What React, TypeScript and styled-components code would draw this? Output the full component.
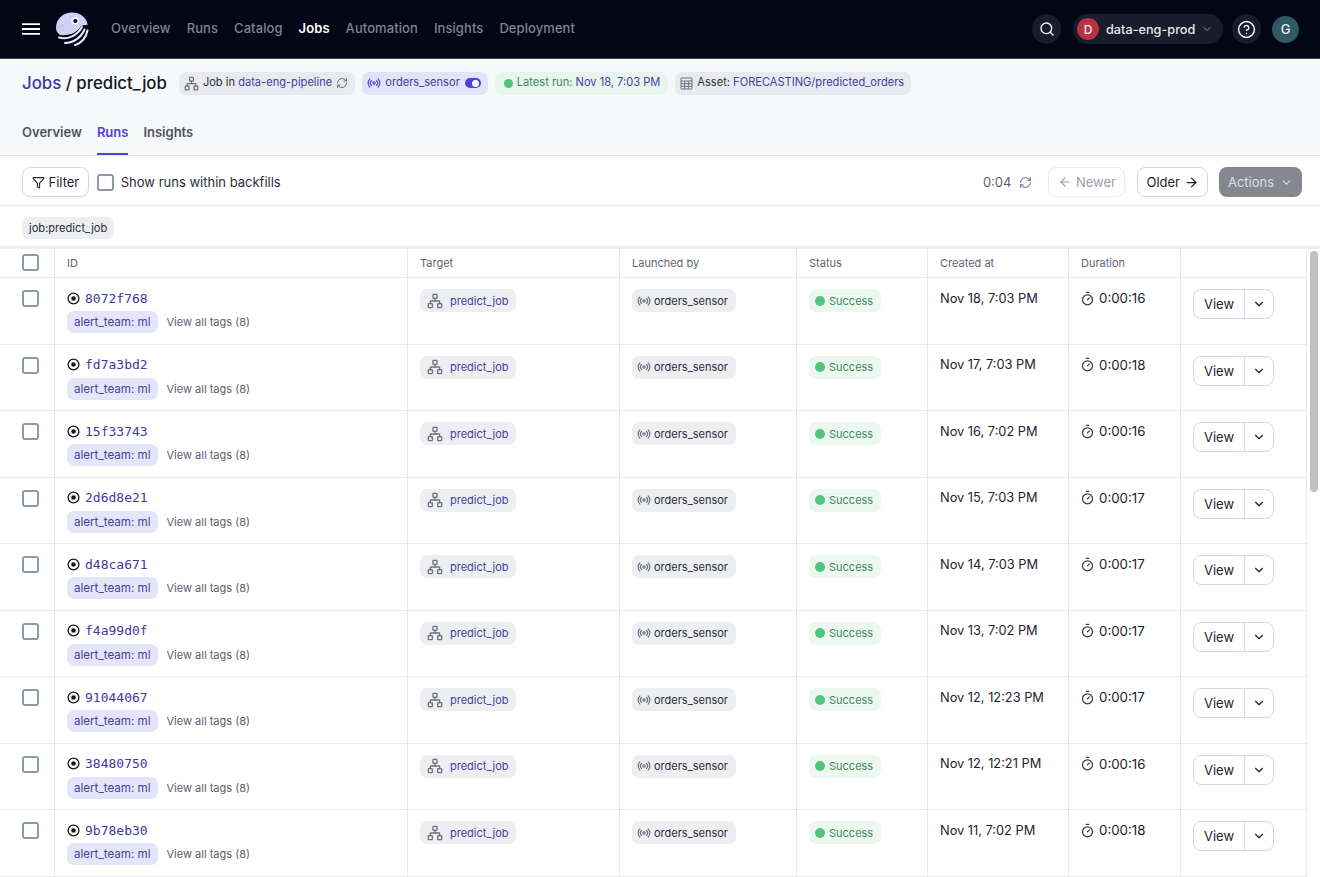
import React from 'react';
import styled, { createGlobalStyle } from 'styled-components';
import {
  ArrowLeft,
  ArrowRight,
  ChevronDown,
  CircleHelp,
  Filter,
  Network,
  Radio,
  RefreshCw,
  Search,
  Timer,
} from 'lucide-react';

const GlobalStyle = createGlobalStyle`
  html, body {
    margin: 0;
    height: 100%;
    overflow: hidden;
    background: #fff;
    font-family: Inter, "Liberation Sans", sans-serif;
    color: #1d2230;
  }
  * { box-sizing: border-box; }
`;

const Page = styled.div`
  display: flex;
  flex-direction: column;
  height: 877px;
  overflow: hidden;
`;

const TopBar = styled.header`
  flex: none;
  height: 59px;
  display: flex;
  align-items: center;
  padding: 0 21px 0 22px;
  background: #030615;
  border-bottom: 1px solid #3b3f50;
`;

const Nav = styled.nav`
  display: flex;
  gap: 16px;
  margin: 0 0 2px 22px;
  flex: 1;
`;

const NavItem = styled.span<{ $active?: boolean }>`
  font-size: 13px;
  letter-spacing: 0.08px;
  font-weight: ${(p) => (p.$active ? 600 : 500)};
  color: ${(p) => (p.$active ? '#fff' : '#7d8391')};
`;

const RoundButton = styled.div`
  width: 29px;
  height: 30px;
  border-radius: 50%;
  display: flex;
  align-items: center;
  justify-content: center;
  background: #191d2b;
  color: #fff;
`;

const Workspace = styled.div`
  height: 30px;
  width: 150px;
  margin: 0 9px 0 12px;
  padding: 0 10px 0 4px;
  border-radius: 15px;
  display: flex;
  align-items: center;
  background: #191d2b;
  color: #e6e7ec;
  font-size: 12.7px;
  font-weight: 500;
`;

const Avatar = styled.span<{ $bg: string; $size: number }>`
  width: ${(p) => p.$size}px;
  height: ${(p) => p.$size}px;
  flex: none;
  border-radius: 50%;
  display: flex;
  align-items: center;
  justify-content: center;
  background: ${(p) => p.$bg};
  color: #e9ebef;
  font-size: 12px;
  font-weight: 500;
`;

const WorkspaceName = styled.span`
  margin-left: 7px;
  flex: 1;
`;

const UserAvatar = styled(Avatar)`
  margin-left: 11px;
  font-size: 13px;
`;

const PageHeader = styled.section`
  flex: none;
  height: 97px;
  padding: 0 22px;
  background: #f7f8fa;
  border-bottom: 1px solid #e4e6eb;
`;

const TitleRow = styled.div`
  height: 48px;
  display: flex;
  align-items: center;
`;

const Title = styled.h1`
  margin: 0 12px 0 0;
  font-size: 16.8px;
  font-weight: 500;
  color: #14171f;
  white-space: nowrap;
`;

const TitleLink = styled.span`
  color: #3d3aa0;
`;

const Chips = styled.div`
  display: flex;
  gap: 7px;
`;

const HeaderChip = styled.div<{ $tone?: 'gray' | 'purple' | 'green' }>`
  height: 23px;
  padding: 0 ${(p) => (p.$tone === 'green' ? '8px 0 9px' : '7px 0 5px')};
  border-radius: 7px;
  display: flex;
  align-items: center;
  gap: 4px;
  font-size: 11.1px;
  line-height: 1;
  white-space: nowrap;
  color: #2b2f3b;
  background: ${(p) =>
    p.$tone === 'purple' ? '#e3e3f8' : p.$tone === 'green' ? '#e7f5ec' : '#e9eaef'};
`;

const ChipRefresh = styled(RefreshCw)`
  width: 12px;
  height: 12px;
  color: #6b7180;
`;

const Linked = styled.span`
  color: #45419f;
`;

const GreenLabel = styled.span`
  color: #3e8a5c;
`;

const Toggle = styled.span`
  width: 16px;
  height: 10px;
  margin-left: 1px;
  border-radius: 5px;
  position: relative;
  background: #4f43dd;

  &::after {
    content: '';
    position: absolute;
    top: 1.5px;
    right: 1.5px;
    width: 7px;
    height: 7px;
    border-radius: 50%;
    background: #fff;
  }
`;

const Dot = styled.span<{ $size: number }>`
  width: ${(p) => p.$size}px;
  height: ${(p) => p.$size}px;
  border-radius: 50%;
  background: #4fc57e;
  flex: none;
`;

const Tabs = styled.div`
  display: flex;
  gap: 15px;
  height: 48px;
`;

const Tab = styled.div<{ $active?: boolean }>`
  height: 48px;
  padding-top: 17px;
  font-size: 13px;
  font-weight: 600;
  color: ${(p) => (p.$active ? '#4f43dd' : '#4f5463')};
  border-bottom: 2px solid ${(p) => (p.$active ? '#4f43dd' : 'transparent')};
`;

const Toolbar = styled.div`
  flex: none;
  height: 50px;
  padding: 3px 18px 0 22px;
  display: flex;
  align-items: center;
  border-bottom: 1px solid #e9eaef;
`;

const Button = styled.button<{ $disabled?: boolean }>`
  height: 30px;
  padding: 0 8.5px;
  display: inline-flex;
  align-items: center;
  gap: 4px;
  border-radius: 8px;
  border: 1px solid ${(p) => (p.$disabled ? '#e9eaf0' : '#d5d8e2')};
  background: #fff;
  font: 400 13px Inter, "Liberation Sans", sans-serif;
  color: ${(p) => (p.$disabled ? '#9a9fac' : '#1d2230')};
`;

const ActionsButton = styled(Button)`
  width: 83px;
  margin-left: 11px;
  border: none;
  color: #dcdee3;
  background: #85888e;
  justify-content: center;
  gap: 6px;
`;

const Box = styled.span`
  width: 17px;
  height: 17px;
  display: block;
  flex: none;
  border-radius: 3px;
  border: 2px solid #8d98ac;
  background: #fff;
`;

const BackfillLabel = styled.label`
  margin-left: 8px;
  display: flex;
  align-items: center;
  gap: 7px;
  flex: 1;
  font-size: 13px;
  color: #2a2e3a;
`;

const Elapsed = styled.span`
  font-size: 13px;
  color: #5b6171;
`;

const RefreshIcon = styled(RefreshCw)`
  width: 13px;
  height: 13px;
  margin: 0 16px 0 8px;
  color: #7b8190;
`;

const OlderButton = styled(Button)`
  padding: 0 8px;
  margin-left: 12px;
`;

const TagRow = styled.div`
  flex: none;
  height: 40px;
  padding: 11px 22px 0;
  display: flex;
  align-items: flex-start;
`;

const PlainTag = styled.span`
  display: inline-flex;
  align-items: center;
  height: 22px;
  padding: 0 7px;
  border-radius: 7px;
  background: #edeef2;
  font-size: 11.1px;
  color: #2a2e3a;
`;

const TableArea = styled.div`
  flex: 1;
  min-height: 0;
  display: flex;
  border-top: 3px solid #eceef2;
  overflow: hidden;
`;

const Table = styled.div`
  width: 1306px;
  flex: none;
`;

const ScrollTrack = styled.div`
  flex: 1;
  padding: 2px 2px 0 3px;
  border-left: 1px solid #e9eaef;
`;

const ScrollThumb = styled.div`
  height: 241px;
  border-radius: 4px;
  background: #c1c1c1;
`;

const columns = '55px 353px 212px 177px 131px 141px 112px 1fr';

const HeaderRow = styled.div`
  display: grid;
  grid-template-columns: ${columns};
  height: 29px;
  border-bottom: 1px solid #e9eaef;
`;

const HeaderCell = styled.div`
  padding: 0 12px 1px;
  display: flex;
  align-items: center;
  font-size: 11px;
  color: #5f6473;
  border-right: 1px solid #e9eaef;

  &:first-child {
    padding-left: 22px;
  }
  &:last-child {
    border-right: none;
  }
`;

const Row = styled.div`
  display: grid;
  grid-template-columns: ${columns};
  height: 66.5px;
  border-bottom: 1px solid #e9eaef;
`;

const Cell = styled.div`
  padding: 11px 12px 0;
  border-right: 1px solid #e9eaef;

  &:last-child {
    border-right: none;
  }
`;

const CheckCell = styled(Cell)`
  padding: 12px 0 0 22px;
`;

const IdLine = styled.div`
  height: 17px;
  margin-top: 0.5px;
  display: flex;
  align-items: center;
  gap: 5px;
`;

const RunId = styled.span`
  font-family: "DejaVu Sans Mono", "Liberation Mono", monospace;
  font-size: 13px;
  color: #3d3aa0;
`;

const TagLine = styled.div`
  margin-top: 4.5px;
  display: flex;
  align-items: center;
  gap: 9px;
`;

const TeamTag = styled.span`
  display: inline-flex;
  align-items: center;
  height: 22px;
  padding: 0 7px;
  border-radius: 7px;
  background: #e5e5f9;
  font-size: 11.6px;
  color: #45419f;
`;

const ViewTags = styled.span`
  font-size: 11px;
  color: #5b6070;
`;

const CellTag = styled.span<{ $tone?: 'gray' | 'green' }>`
  display: inline-flex;
  align-items: center;
  height: 23px;
  padding: 0 8px 0 6px;
  gap: 4px;
  border-radius: 7px;
  font-size: 11px;
  background: ${(p) => (p.$tone === 'green' ? '#ebf7ef' : '#edeef2')};
  color: ${(p) => (p.$tone === 'green' ? '#3e8a5c' : '#2a2e3a')};
`;

const TargetTag = styled(CellTag)`
  padding: 0 8px 0 7px;
  gap: 7px;
  color: #45419f;
`;

const SensorTag = styled(CellTag)`
  padding: 0 8px 0 5px;
  gap: 3px;
`;

const CreatedText = styled.div`
  height: 17px;
  margin-top: 0.5px;
  display: flex;
  align-items: center;
  font-size: 12.8px;
  color: #1d2230;
`;

const DurationText = styled(CreatedText)`
  gap: 4px;
  margin-left: -1px;
  font-size: 13.3px;
`;

const SplitButton = styled.div`
  width: 81px;
  height: 30px;
  display: flex;
  border-radius: 8px;
  border: 1px solid #d5d8e2;
  background: #fff;
`;

const SplitLabel = styled.span`
  width: 51px;
  display: flex;
  align-items: center;
  justify-content: center;
  font-size: 13px;
  border-right: 1px solid #d5d8e2;
`;

const SplitCaret = styled.span`
  flex: 1;
  display: flex;
  align-items: center;
  justify-content: center;
`;

const MenuIcon = () => (
  <svg width="18" height="12" viewBox="0 0 18 12" fill="none" stroke="#fff" strokeWidth="1.8" style={{ marginRight: 15 }}>
    <path d="M0 1.2h18M0 6h18M0 10.8h18" />
  </svg>
);

const Logo = () => (
  <svg width="34" height="34" viewBox="0 0 34 34" fill="none">
    <path
      d="M1 16C1 7 8 .5 17 .5S32.5 7 32.5 13C30 13 28 13 26 14 22 21 14 24 5 23 2.5 21 1 19 1 16Z"
      fill="#d3d0f6"
    />
    <circle cx="20" cy="8.7" r="3.8" fill="#f6f5ff" />
    <circle cx="20.4" cy="9" r="2.1" fill="#030615" />
    <circle cx="4.5" cy="15.5" r="0.9" fill="#b4aeee" />
    <circle cx="7.5" cy="13.5" r="0.9" fill="#b4aeee" />
    <circle cx="7.5" cy="17.5" r="0.9" fill="#b4aeee" />
    <path d="M4 25.5C12 28 22 24 27 15" stroke="#ecebfc" strokeWidth="2" strokeLinecap="round" />
    <path d="M10 31C18 31 26 26 29.5 17.5" stroke="#ecebfc" strokeWidth="2" strokeLinecap="round" />
    <path d="M20 33.2C26 31 31 26 32.5 18.5" stroke="#ecebfc" strokeWidth="2" strokeLinecap="round" />
  </svg>
);

const AssetIcon = () => (
  <svg width="13" height="13" viewBox="0 0 13 13" fill="none" stroke="#6b7180" strokeWidth="1">
    <rect x="1" y="1" width="11" height="11" rx="0.5" />
    <path d="M1 4h11M1 6.7h11M1 9.4h11M4.6 4v8M8.3 4v8" />
  </svg>
);

const RunIcon = () => (
  <svg width="13" height="13" viewBox="0 0 13 13" fill="none">
    <circle cx="6.5" cy="6.5" r="5.4" stroke="#14171f" strokeWidth="1.3" />
    <circle cx="6.5" cy="6.5" r="2.3" fill="#14171f" />
  </svg>
);

const runs = [
  ['8072f768', 'Nov 18, 7:03 PM', '0:00:16'],
  ['fd7a3bd2', 'Nov 17, 7:03 PM', '0:00:18'],
  ['15f33743', 'Nov 16, 7:02 PM', '0:00:16'],
  ['2d6d8e21', 'Nov 15, 7:03 PM', '0:00:17'],
  ['d48ca671', 'Nov 14, 7:03 PM', '0:00:17'],
  ['f4a99d0f', 'Nov 13, 7:02 PM', '0:00:17'],
  ['91044067', 'Nov 12, 12:23 PM', '0:00:17'],
  ['38480750', 'Nov 12, 12:21 PM', '0:00:16'],
  ['9b78eb30', 'Nov 11, 7:02 PM', '0:00:18'],
];

const navItems = ['Overview', 'Runs', 'Catalog', 'Jobs', 'Automation', 'Insights', 'Deployment'];

export default function App() {
  return (
    <Page>
      <GlobalStyle />
      <TopBar>
        <MenuIcon />
        <Logo />
        <Nav>
          {navItems.map((item) => (
            <NavItem key={item} $active={item === 'Jobs'}>
              {item}
            </NavItem>
          ))}
        </Nav>
        <RoundButton>
          <Search size={16} strokeWidth={2} />
        </RoundButton>
        <Workspace>
          <Avatar $bg="#b83245" $size={22}>
            D
          </Avatar>
          <WorkspaceName>data-eng-prod</WorkspaceName>
          <ChevronDown size={12} color="#8a8f9c" />
        </Workspace>
        <RoundButton>
          <CircleHelp size={19} strokeWidth={1.8} />
        </RoundButton>
        <UserAvatar $bg="#2f5a63" $size={27}>
          G
        </UserAvatar>
      </TopBar>

      <PageHeader>
        <TitleRow>
          <Title>
            <TitleLink>Jobs</TitleLink> / predict_job
          </Title>
          <Chips>
            <HeaderChip>
              <Network size={15} color="#6b7180" />
              <span>
                Job in <Linked>data-eng-pipeline</Linked>
              </span>
              <ChipRefresh />
            </HeaderChip>
            <HeaderChip $tone="purple">
              <Radio size={14} color="#4f43dd" />
              <Linked>orders_sensor</Linked>
              <Toggle />
            </HeaderChip>
            <HeaderChip $tone="green">
              <Dot $size={9} />
              <span>
                <GreenLabel>Latest run:</GreenLabel> <Linked>Nov 18, 7:03 PM</Linked>
              </span>
            </HeaderChip>
            <HeaderChip>
              <AssetIcon />
              <span>
                Asset: <Linked>FORECASTING/predicted_orders</Linked>
              </span>
            </HeaderChip>
          </Chips>
        </TitleRow>
        <Tabs>
          <Tab>Overview</Tab>
          <Tab $active>Runs</Tab>
          <Tab>Insights</Tab>
        </Tabs>
      </PageHeader>

      <Toolbar>
        <Button>
          <Filter size={13} />
          Filter
        </Button>
        <BackfillLabel>
          <Box />
          Show runs within backfills
        </BackfillLabel>
        <Elapsed>0:04</Elapsed>
        <RefreshIcon />
        <Button $disabled>
          <ArrowLeft size={14} />
          Newer
        </Button>
        <OlderButton>
          Older
          <ArrowRight size={15} />
        </OlderButton>
        <ActionsButton>
          Actions
          <ChevronDown size={13} />
        </ActionsButton>
      </Toolbar>

      <TagRow>
        <PlainTag>job:predict_job</PlainTag>
      </TagRow>

      <TableArea>
        <Table>
          <HeaderRow>
            <HeaderCell>
              <Box />
            </HeaderCell>
            <HeaderCell>ID</HeaderCell>
            <HeaderCell>Target</HeaderCell>
            <HeaderCell>Launched by</HeaderCell>
            <HeaderCell>Status</HeaderCell>
            <HeaderCell>Created at</HeaderCell>
            <HeaderCell>Duration</HeaderCell>
            <HeaderCell />
          </HeaderRow>
          {runs.map(([id, created, duration]) => (
            <Row key={id}>
              <CheckCell>
                <Box />
              </CheckCell>
              <Cell>
                <IdLine>
                  <RunIcon />
                  <RunId>{id}</RunId>
                </IdLine>
                <TagLine>
                  <TeamTag>alert_team: ml</TeamTag>
                  <ViewTags>View all tags (8)</ViewTags>
                </TagLine>
              </Cell>
              <Cell>
                <TargetTag>
                  <Network size={16} color="#6b7180" />
                  predict_job
                </TargetTag>
              </Cell>
              <Cell>
                <SensorTag>
                  <Radio size={14} color="#6b7180" />
                  orders_sensor
                </SensorTag>
              </Cell>
              <Cell>
                <CellTag $tone="green">
                  <Dot $size={10} />
                  Success
                </CellTag>
              </Cell>
              <Cell>
                <CreatedText>{created}</CreatedText>
              </Cell>
              <Cell>
                <DurationText>
                  <Timer size={15} color="#3a3f4c" />
                  {duration}
                </DurationText>
              </Cell>
              <Cell>
                <SplitButton>
                  <SplitLabel>View</SplitLabel>
                  <SplitCaret>
                    <ChevronDown size={14} />
                  </SplitCaret>
                </SplitButton>
              </Cell>
            </Row>
          ))}
        </Table>
        <ScrollTrack>
          <ScrollThumb />
        </ScrollTrack>
      </TableArea>
    </Page>
  );
}
